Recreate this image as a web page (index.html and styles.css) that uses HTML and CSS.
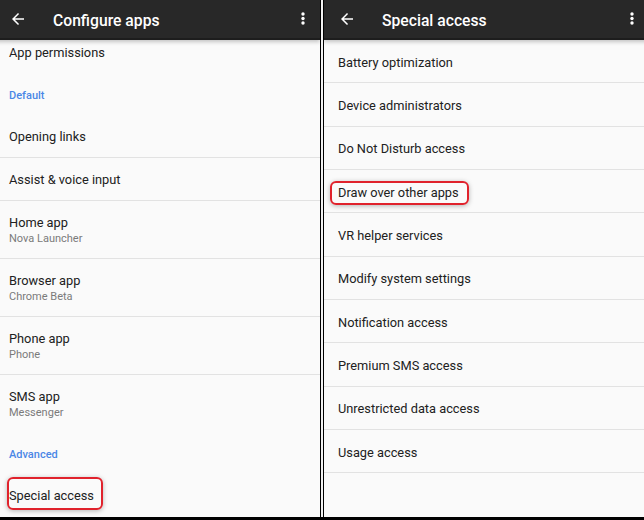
FILE: index.html
```html
<!DOCTYPE html>
<html>
<head>
<meta charset="utf-8">
<link rel="stylesheet" href="styles.css">
</head>
<body>
<div class="frame">
  <div class="viewport viewport-left">
    <div class="screen">
      <div class="appbar">
        <svg class="back" viewBox="0 0 24 24" width="18" height="18"><path d="M20 11H7.83l5.59-5.59L12 4l-8 8 8 8 1.41-1.41L7.83 13H20v-2z" fill="#fff"/></svg>
        <span class="title">Configure apps</span>
        <svg class="more" viewBox="0 0 4 14" width="4" height="14"><circle cx="2" cy="2" r="1.7" fill="#fff"/><circle cx="2" cy="6.5" r="1.7" fill="#fff"/><circle cx="2" cy="11" r="1.7" fill="#fff"/></svg>
      </div>
      <div class="list list-scrolled">
        <div class="row row-last"><span class="label">App permissions</span></div>
        <div class="header">Default</div>
        <div class="row"><span class="label">Opening links</span></div>
        <div class="row"><span class="label">Assist &amp; voice input</span></div>
        <div class="row row-two"><span class="label">Home app</span><span class="sub">Nova Launcher</span></div>
        <div class="row row-two"><span class="label">Browser app</span><span class="sub">Chrome Beta</span></div>
        <div class="row row-two"><span class="label">Phone app</span><span class="sub">Phone</span></div>
        <div class="row row-two row-last"><span class="label">SMS app</span><span class="sub">Messenger</span></div>
        <div class="header">Advanced</div>
        <div class="row row-last"><span class="label">Special access</span><span class="mark mark-left"></span></div>
      </div>
    </div>
  </div>
  <div class="gap"></div>
  <div class="viewport viewport-right">
    <div class="screen">
      <div class="appbar">
        <svg class="back" viewBox="0 0 24 24" width="18" height="18"><path d="M20 11H7.83l5.59-5.59L12 4l-8 8 8 8 1.41-1.41L7.83 13H20v-2z" fill="#fff"/></svg>
        <span class="title">Special access</span>
        <svg class="more" viewBox="0 0 4 14" width="4" height="14"><circle cx="2" cy="2" r="1.7" fill="#fff"/><circle cx="2" cy="6.5" r="1.7" fill="#fff"/><circle cx="2" cy="11" r="1.7" fill="#fff"/></svg>
      </div>
      <div class="list">
        <div class="row row-even"><span class="label">Battery optimization</span></div>
        <div class="row row-even"><span class="label">Device administrators</span></div>
        <div class="row row-even"><span class="label">Do Not Disturb access</span></div>
        <div class="row row-even"><span class="label">Draw over other apps</span><span class="mark mark-right"></span></div>
        <div class="row row-even"><span class="label">VR helper services</span></div>
        <div class="row row-even"><span class="label">Modify system settings</span></div>
        <div class="row row-even"><span class="label">Notification access</span></div>
        <div class="row row-even"><span class="label">Premium SMS access</span></div>
        <div class="row row-even"><span class="label">Unrestricted data access</span></div>
        <div class="row row-even"><span class="label">Usage access</span></div>
      </div>
    </div>
  </div>
</div>
</body>
</html>
```

FILE: styles.css
```css
* { box-sizing: border-box; }
html, body { margin: 0; padding: 0; background: #000; }
body { font-family: Roboto, "Noto Sans", "Liberation Sans", sans-serif; }

.frame {
  display: flex;
  width: 644px;
  height: 520px;
  border-bottom: 3px solid #000;
  background: #000;
}

.viewport {
  width: 320px;
  height: 517px;
  overflow: hidden;
  background: #fafafa;
}

.gap {
  width: 4px;
  height: 517px;
  border-left: 1px solid #000;
  border-right: 1px solid #000;
  background: #f2f2f2;
}

.screen {
  width: 325px;
  height: 517px;
  background: #fafafa;
}
.viewport-left .screen { margin-left: -5px; }

.appbar {
  position: relative;
  z-index: 1;
  display: flex;
  align-items: center;
  height: 40px;
  background: #282828;
  border-bottom: 2px solid #1d1d1d;
  box-shadow: 0 2px 4px rgba(0, 0, 0, 0.22);
}
.back { margin-left: 14px; flex: none; }
.title {
  margin-left: 26px;
  padding-top: 2px;
  color: #fff;
  font-size: 15.7px;
  font-weight: 500;
  flex: 1;
}
.more { margin-right: 15px; flex: none; }

.list-scrolled { margin-top: -9px; }

.row {
  position: relative;
  display: flex;
  flex-direction: column;
  justify-content: center;
  height: 43px;
  padding-left: 14px;
  padding-top: 1px;
  border-bottom: 1px solid #e2e2e2;
}
.row-last { border-bottom-color: transparent; }
.row-two { height: 58px; }
.row-even { height: 43.35px; padding-top: 2px; }

.label {
  color: #212121;
  font-size: 12.8px;
  line-height: 17px;
}
.sub {
  color: #7a7a7a;
  font-size: 11px;
  line-height: 15px;
}

.header {
  display: flex;
  align-items: center;
  height: 41px;
  padding-left: 14px;
  padding-top: 1px;
  color: #4a87e6;
  font-size: 11px;
  font-weight: 500;
}

.mark {
  position: absolute;
  border: 2px solid #e0222c;
  border-radius: 6px;
  box-shadow: 0 1px 5px rgba(0, 0, 0, 0.28);
}
.mark-left { left: 12px; top: 3px; width: 96px; height: 33px; }
.mark-right { left: 6px; top: 11px; width: 139px; height: 24px; }
```
